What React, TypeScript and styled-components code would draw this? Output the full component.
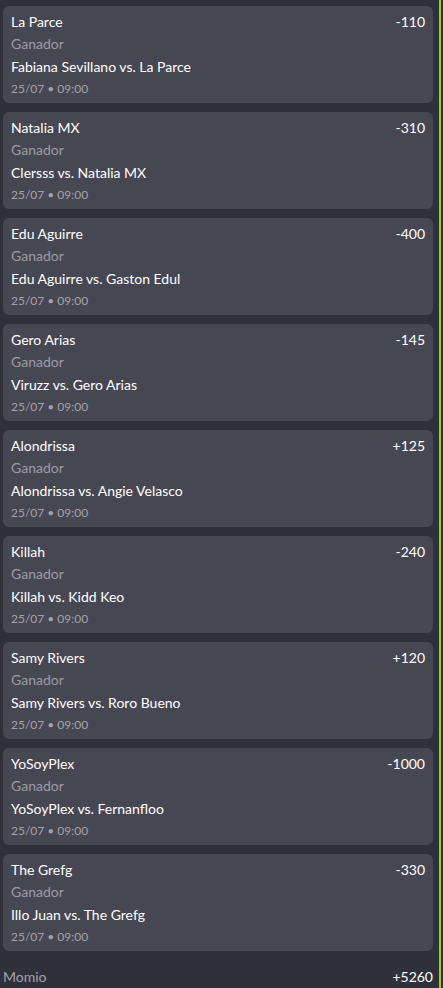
import styled, { createGlobalStyle } from "styled-components";

const GlobalStyle = createGlobalStyle`
    html, body {
        margin: 0;
        padding: 0;
        background: #30303b;
    }
    body {
        font-family: Lato, "Noto Sans", sans-serif;
    }
`;

type Pick = {
    selection: string;
    odds: string;
    match: string;
};

const picks: Pick[] = [
    { selection: "La Parce", odds: "-110", match: "Fabiana Sevillano vs. La Parce" },
    { selection: "Natalia MX", odds: "-310", match: "Clersss vs. Natalia MX" },
    { selection: "Edu Aguirre", odds: "-400", match: "Edu Aguirre vs. Gaston Edul" },
    { selection: "Gero Arias", odds: "-145", match: "Viruzz vs. Gero Arias" },
    { selection: "Alondrissa", odds: "+125", match: "Alondrissa vs. Angie Velasco" },
    { selection: "Killah", odds: "-240", match: "Killah vs. Kidd Keo" },
    { selection: "Samy Rivers", odds: "+120", match: "Samy Rivers vs. Roro Bueno" },
    { selection: "YoSoyPlex", odds: "-1000", match: "YoSoyPlex vs. Fernanfloo" },
    { selection: "The Grefg", odds: "-330", match: "Illo Juan vs. The Grefg" },
];

function App() {
    return (
        <>
            <GlobalStyle />
            <Slip>
                <List>
                    {picks.map((p) => (
                        <Card key={p.selection}>
                            <TopRow>
                                <Selection>{p.selection}</Selection>
                                <Odds>{p.odds}</Odds>
                            </TopRow>
                            <Market>Ganador</Market>
                            <Match>{p.match}</Match>
                            <When>25/07 • 09:00</When>
                        </Card>
                    ))}
                </List>
                <Total>
                    <span className="label">Momio</span>
                    <span className="value">+5260</span>
                </Total>
            </Slip>
        </>
    );
}

const Slip = styled.div`
    width: 441px;
    min-height: 988px;
    box-sizing: border-box;
    border-right: 2px solid #9fcd2a;
    padding: 6px 6px 0 3px;
    color: #ffffff;
`;

const List = styled.div`
    display: flex;
    flex-direction: column;
    gap: 9px;
`;

const Card = styled.div`
    background: #474753;
    border-radius: 6px;
    padding: 5px 8px;
    display: flex;
    flex-direction: column;
    height: 97px;
    box-sizing: border-box;
`;

const TopRow = styled.div`
    display: flex;
    justify-content: space-between;
    align-items: center;
    height: 22px;
    font-size: 14px;
`;

const Selection = styled.span`
    color: #ffffff;
`;

const Odds = styled.span`
    color: #ffffff;
`;

const Market = styled.div`
    color: #9b9ba3;
    font-size: 14px;
    line-height: 22px;
    margin-top: 1px;
`;

const Match = styled.div`
    color: #ffffff;
    font-size: 14px;
    line-height: 22px;
    margin-top: 1px;
`;

const When = styled.div`
    color: #a2a2aa;
    font-size: 12px;
    line-height: 18px;
    margin-top: 2px;
`;

const Total = styled.div`
    display: flex;
    justify-content: space-between;
    align-items: center;
    height: 32px;
    margin-top: 9px;
    font-size: 14px;

    .label {
        color: #a0a0a8;
    }

    .value {
        color: #ffffff;
    }
`;

export default App;
